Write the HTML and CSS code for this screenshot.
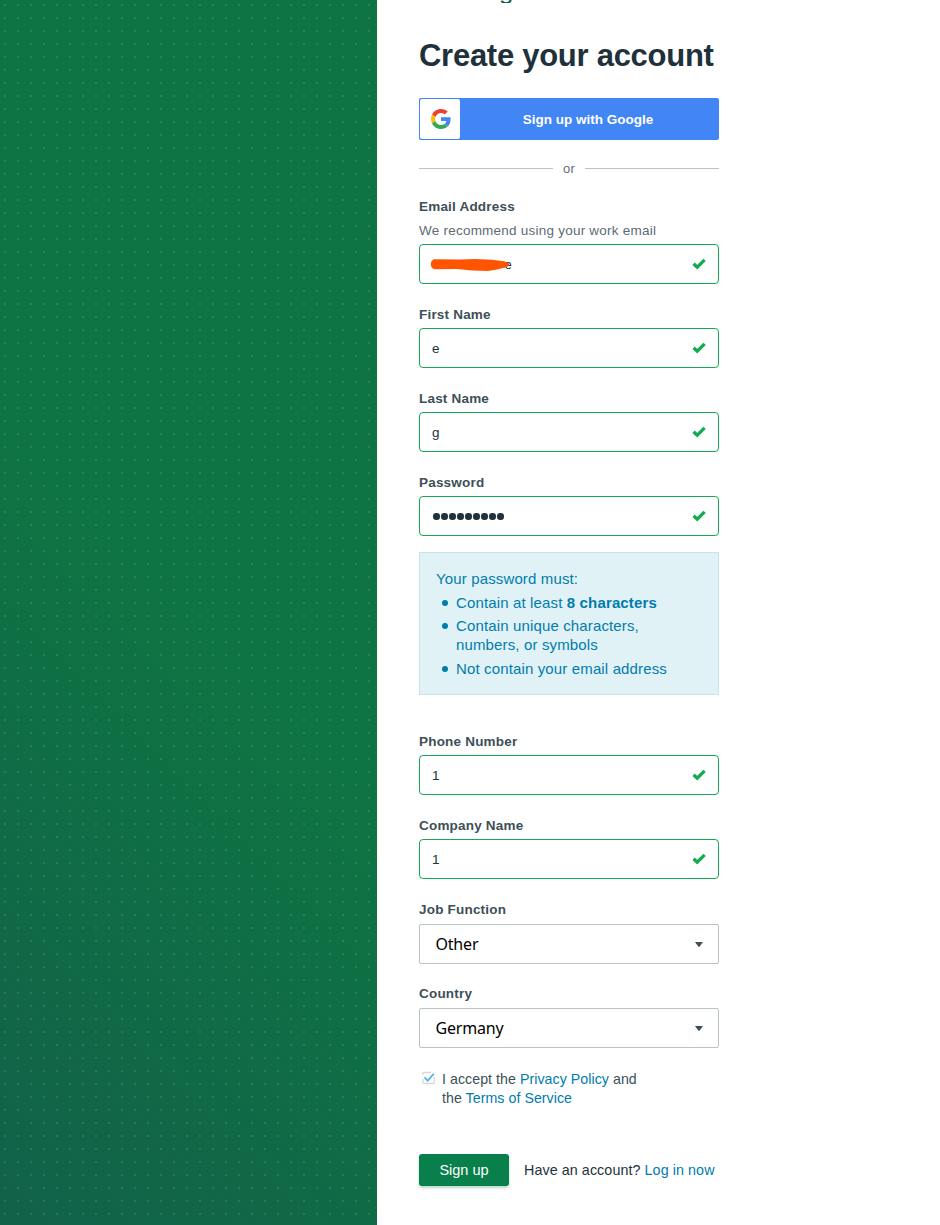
FILE: index.html
```html
<!DOCTYPE html>
<html lang="en">
<head>
<meta charset="utf-8">
<title>Create your account</title>
<link rel="stylesheet" href="styles.css">
</head>
<body>
<svg class="defs" aria-hidden="true">
  <symbol id="check" viewBox="0 0 14 12"><path d="M1.6 5.7 5.2 9.2 12.6 1.9" fill="none" stroke="#13aa52" stroke-width="3.3"/></symbol>
  <symbol id="caret" viewBox="0 0 8 5"><path d="M0 0H8L4.7 4.6Q4 5.3 3.3 4.6Z" fill="#3d4f58"/></symbol>
</svg>
<div class="page">
  <aside class="art"></aside>
  <main class="panel">
    <header class="brand"><span>g</span></header>
    <h1 class="title">Create your account</h1>
    <form class="form">
      <button type="button" class="google">
        <span class="google-icon">
          <svg width="20" height="20" viewBox="0 0 48 48"><path fill="#EA4335" d="M24 9.5c3.54 0 6.71 1.22 9.21 3.6l6.85-6.85C35.9 2.38 30.47 0 24 0 14.62 0 6.51 5.38 2.56 13.22l7.98 6.19C12.43 13.72 17.74 9.5 24 9.5z"/><path fill="#4285F4" d="M46.98 24.55c0-1.57-.15-3.09-.38-4.55H24v9.02h12.94c-.58 2.96-2.26 5.48-4.78 7.18l7.73 6c4.51-4.18 7.09-10.36 7.09-17.65z"/><path fill="#FBBC05" d="M10.53 28.59c-.48-1.45-.76-2.99-.76-4.59s.27-3.14.76-4.59l-7.98-6.19C.92 16.46 0 20.12 0 24c0 3.88.92 7.54 2.56 10.78l7.97-6.19z"/><path fill="#34A853" d="M24 48c6.48 0 11.93-2.13 15.89-5.81l-7.73-6c-2.15 1.45-4.92 2.3-8.16 2.3-6.26 0-11.57-4.22-13.47-9.91l-7.98 6.19C6.51 42.62 14.62 48 24 48z"/></svg>
        </span>
        <span class="google-text">Sign up with Google</span>
      </button>
      <div class="or"><span>or</span></div>

      <label class="label" for="email">Email Address</label>
      <p class="hint">We recommend using your work email</p>
      <div class="field">
        <span class="redacted">e<svg class="scribble" width="82" height="14" viewBox="0 0 82 14"><path fill="#ff5500" d="M4 1.2 30 1.6 45 1 62 1.8 74 3.2Q79.5 4.5 79 6.5 78 9.2 74 9.8L67 11.5 58 13 42 12.4 27 11 5 11.3Q1 10.5.8 6.5.7 2.5 4 1.2Z"/></svg></span>
        <svg class="check"><use href="#check"/></svg>
      </div>
      <label class="label" for="first">First Name</label>
      <div class="field"><input id="first" value="e"><svg class="check"><use href="#check"/></svg></div>
      <label class="label" for="last">Last Name</label>
      <div class="field"><input id="last" value="g"><svg class="check"><use href="#check"/></svg></div>
      <label class="label" for="pass">Password</label>
      <div class="field"><span class="mask" id="pass"><i></i><i></i><i></i><i></i><i></i><i></i><i></i><i></i><i></i></span><svg class="check"><use href="#check"/></svg></div>

      <section class="rules">
        <p>Your password must:</p>
        <ul>
          <li>Contain at least <b>8 characters</b></li>
          <li>Contain unique characters,<br>numbers, or symbols</li>
          <li>Not contain your email address</li>
        </ul>
      </section>

      <label class="label" for="phone">Phone Number</label>
      <div class="field"><input id="phone" value="1"><svg class="check"><use href="#check"/></svg></div>
      <label class="label" for="company">Company Name</label>
      <div class="field"><input id="company" value="1"><svg class="check"><use href="#check"/></svg></div>
      <label class="label">Job Function</label>
      <div class="select"><span>Other</span><svg class="caret"><use href="#caret"/></svg></div>
      <label class="label">Country</label>
      <div class="select"><span>Germany</span><svg class="caret"><use href="#caret"/></svg></div>

      <div class="terms">
        <svg width="14" height="14" viewBox="0 0 14 14" fill="none"><path d="M10 1.5H3Q1.8 1.5 1.8 2.5V4M1.8 8V11.5Q1.8 12.5 3 12.5H12Q13.2 12.5 13.2 11.5V6" stroke="#d3d8dc" stroke-width="1.3"/><path d="M3.5 6.2 6.7 9.7 12.8 2.8" stroke="#45b1e8" stroke-width="1.7"/></svg>
        <p>I accept the <a>Privacy Policy</a> and<br>the <a>Terms of Service</a></p>
      </div>
      <div class="actions">
        <button type="button" class="submit">Sign up</button>
        <span class="login">Have an account? <a>Log in now</a></span>
      </div>
    </form>
  </main>
</div>
</body>
</html>
```
FILE: styles.css
```css
* { box-sizing: border-box; }
body { margin: 0; background: #fff; color: #21313c; font-family: "Liberation Sans", Arial, sans-serif; }
p, h1, ul { margin: 0; padding: 0; }
svg { display: block; flex: none; }
.defs { position: absolute; width: 0; height: 0; }
.page { display: flex; height: 1225px; overflow: hidden; }
.art {
  width: 377px;
  flex: none;
  background:
    conic-gradient(from 0deg at 2px 2px, transparent 75%, rgba(255,255,255,.11) 0) 4px 4px / 13px 13px,
    conic-gradient(from 0deg at 1px 1px, transparent 75%, rgba(255,255,255,.04) 0) 11px 11px / 13px 13px,
    linear-gradient(45deg, #116149, #0f7443 50%);
}
.panel { width: 300px; margin-left: 42px; }
.brand { height: 3px; overflow: hidden; display: flex; align-items: flex-end; padding-left: 80px; color: #116149; font-size: 26px; line-height: 26px; }
.title { margin-top: 33px; height: 40px; line-height: 40px; font-size: 31px; letter-spacing: -.27px; white-space: nowrap; }
.form { padding-top: 22px; display: flex; flex-direction: column; }
.google { display: flex; height: 42px; padding: 1px; border: 0; border-radius: 2px; background: #4285f4; color: #fff; font: bold 13.5px/41px "Liberation Sans", Arial, sans-serif; }
.google-icon { width: 40px; height: 40px; border-radius: 2px; background: #fff; display: grid; place-items: center; }
.google-icon svg { margin-left: 1px; }
.google-text { flex: 1; padding-right: 2px; }
.or { display: flex; align-items: center; gap: 10px; height: 20px; margin: 18px 0; color: #5d6c74; font-size: 13px; letter-spacing: .2px; }
.or::before, .or::after { content: ""; flex: 1; height: 1px; background: #b8c4c2; }
.label { height: 20px; margin-bottom: 4px; font-size: 13.5px; line-height: 21px; font-weight: bold; letter-spacing: .2px; color: #3d4f58; }
.hint { height: 24px; font-size: 13.5px; line-height: 22px; letter-spacing: .23px; color: #5d6c74; white-space: nowrap; }
.field { display: flex; align-items: center; justify-content: space-between; height: 40px; margin-bottom: 20px; padding: 0 12px; border: 1px solid #13aa52; border-radius: 4px; }
.field input { width: 200px; padding: 0; border: 0; outline: 0; background: none; color: #21313c; font: 13.5px "Liberation Sans", Arial, sans-serif; }
.check { width: 14px; height: 12px; }
.redacted { position: relative; padding-left: 72.5px; font-size: 13px; }
.scribble { position: absolute; left: -2px; top: 1px; }
.mask { display: flex; gap: 1.5px; padding: 1px 0 0 1px; }
.mask i { width: 6.5px; height: 6.5px; border-radius: 50%; background: #21313c; }
.rules { height: 143px; margin: -4px 0 36px; padding: 16px; border: 1px solid #c5e4f2; background: #e1f2f6; color: #007cad; font-size: 15px; line-height: 19px; letter-spacing: .14px; white-space: nowrap; }
.rules ul { padding-left: 20px; list-style: none; }
.rules li { position: relative; margin-top: 4.6px; }
.rules li::before { content: ""; position: absolute; left: -14px; top: 7px; width: 6px; height: 6px; border-radius: 50%; background: #007cad; }
.rules b { letter-spacing: .15px; }
.select { display: flex; align-items: center; justify-content: space-between; height: 40px; margin: 1px 0 19px; padding: 0 15px 0 15.5px; border: 1px solid #b8c4c2; border-radius: 2px; color: #000; font: 16px "Noto Sans", sans-serif; letter-spacing: -.2px; }
.caret { width: 8px; height: 5px; }
.terms { display: flex; gap: 7px; padding-left: 2px; margin-top: 3px; color: #3d4f58; font-size: 14.2px; line-height: 19px; letter-spacing: .05px; }
.terms svg { margin-top: 1px; }
a { color: #007cad; }
.actions { display: flex; align-items: center; margin-top: 46px; }
.submit { width: 90px; height: 32px; padding: 0; border: 0; border-radius: 3px; background: #09804c; box-shadow: 0 2px 3px rgba(9,128,76,.3); color: #fff; font: 14.5px "Liberation Sans", Arial, sans-serif; }
.login { margin-left: 15px; font-size: 14.3px; letter-spacing: .08px; white-space: nowrap; }
```
